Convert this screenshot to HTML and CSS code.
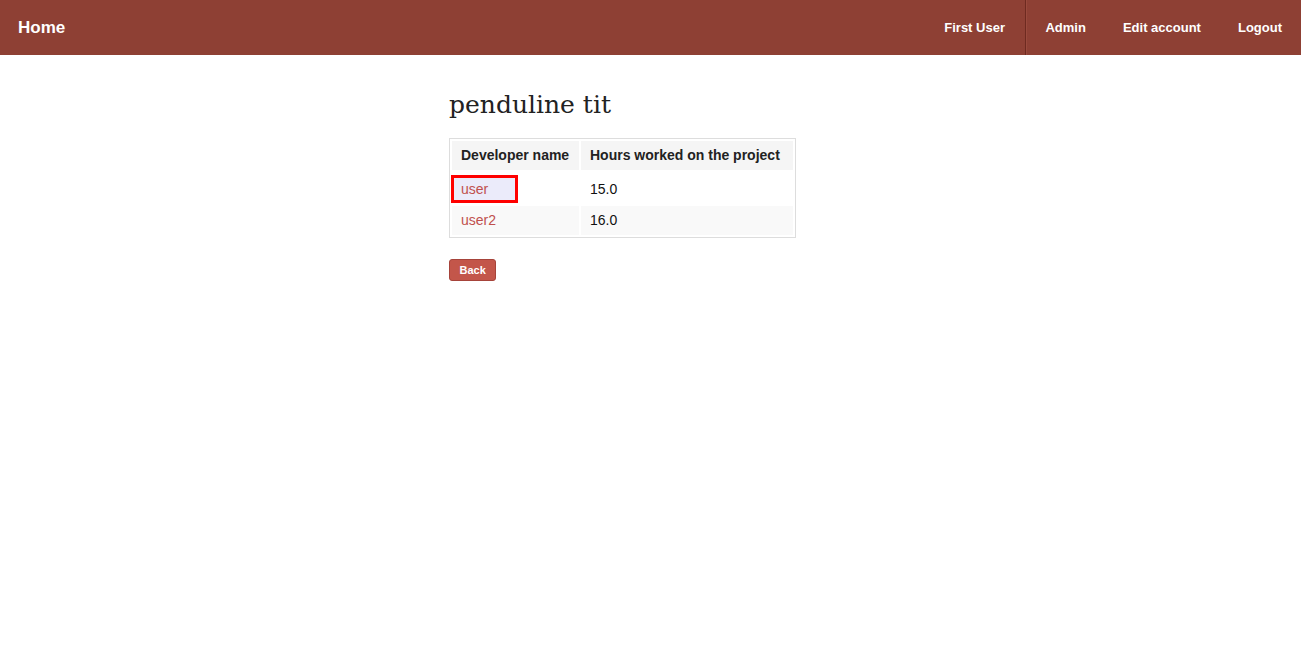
FILE: index.html
```html
<!DOCTYPE html>
<html>
<head>
<meta charset="utf-8">
<link rel="stylesheet" href="styles.css">
</head>
<body>
<nav class="navbar">
  <a class="brand" href="#">Home</a>
  <ul class="nav">
    <li><a href="#">First User</a></li>
    <li class="divider"></li>
    <li><a href="#">Admin</a></li>
    <li><a href="#">Edit account</a></li>
    <li><a href="#">Logout</a></li>
  </ul>
</nav>
<main class="content">
  <h1 class="title">penduline tit</h1>
  <table class="devs">
    <thead>
      <tr><th>Developer name</th><th class="hours">Hours worked on the project</th></tr>
    </thead>
    <tbody>
      <tr class="first"><td class="name"><a class="focused" href="#">user</a></td><td>15.0</td></tr>
      <tr class="alt"><td class="name"><a href="#">user2</a></td><td>16.0</td></tr>
    </tbody>
  </table>
  <a class="btn" href="#">Back</a>
</main>
</body>
</html>
```
FILE: styles.css
```css
html, body { margin: 0; padding: 0; background: #fff; }
body { font-family: "Liberation Sans", Arial, sans-serif; font-size: 14px; color: #222; }
a { text-decoration: none; }

.navbar {
  height: 55px;
  background: #8e4034;
  display: flex;
  align-items: center;
  justify-content: space-between;
}
.brand {
  color: #fff;
  font-weight: bold;
  font-size: 17px;
  padding-left: 18px;
}
.nav {
  list-style: none;
  margin: 0;
  padding: 0;
  display: flex;
  height: 55px;
  align-items: stretch;
}
.nav li { display: flex; align-items: center; }
.nav a {
  color: #fff;
  font-weight: bold;
  font-size: 13px;
  padding: 0 18.5px;
}
.nav li:first-child a { padding-right: 20px; }
.nav li:last-child a { padding-right: 19px; }
.nav .divider {
  width: 1px;
  background: #6e2a20;
  border-right: 1px solid #9a4a3d;
}

.content {
  width: 403px;
  margin: 0 auto;
  padding-top: 33px;
}
.title {
  font-family: "DejaVu Serif", Georgia, serif;
  font-weight: normal;
  font-size: 25px;
  color: #222;
  margin: 0 0 16px 0;
  line-height: 34px;
}
.devs {
  border: 1px solid #ddd;
  border-spacing: 2px;
  border-collapse: separate;
  padding: 0;
}
.devs th, .devs td {
  text-align: left;
  padding: 0 9px;
}
.devs th {
  background: #f5f5f5;
  font-weight: bold;
  color: #222;
  height: 28px;
  padding-right: 8px;
  padding-bottom: 1px;
}
.devs th.hours { padding-right: 13px; }
.devs td { color: #111; }
.devs td.name { width: 109px; position: relative; isolation: isolate; }
.devs tr.first td { height: 31px; padding-top: 1px; }
.devs tr.alt td { height: 28px; padding-bottom: 1px; background: #f9f9f9; }
.devs td a { color: #c0504d; }
.focused::after {
  content: "";
  position: absolute;
  left: -1px; top: 3px;
  width: 61px; height: 22px;
  border: 3px solid #f00;
  background: #ebebfa;
  z-index: -1;
}
.btn {
  display: inline-block;
  margin-top: 21px;
  background: #c3564a;
  border: 1px solid #a6433a;
  border-radius: 3px;
  color: #fff;
  font-weight: bold;
  font-size: 11px;
  padding: 4px 9.5px 4px;
  line-height: 12px;
}
```
